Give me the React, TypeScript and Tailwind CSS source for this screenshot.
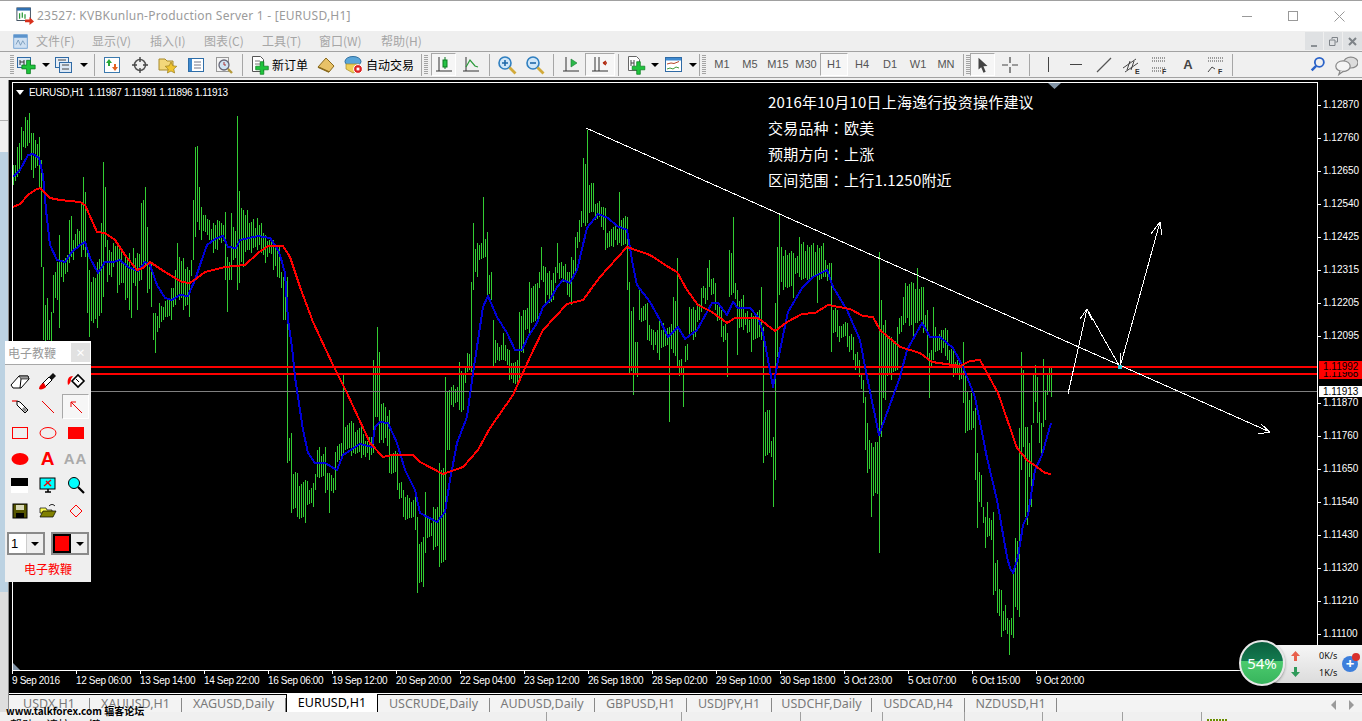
import React from 'react'

// [x, high, low] read off the chart, in page pixels
const BARS: number[][] = [
  [13,165,185],[17,147,177],[19,143,173],[21,127,160],[25,117,148],[29,113,143],[31,133,170],[33,133,178],[35,140,168],[39,137,187],
  [41,160,267],[43,267,340],[47,298,340],[49,320,340],[51,312,345],[53,275,313],[57,262,300],[59,235,328],[63,260,282],[67,255,272],
  [69,220,263],[71,216,257],[73,240,260],[77,229,247],[81,202,257],[83,177,250],[85,192,257],[87,253,313],[89,270,337],[93,277,323],
  [97,262,328],[101,223,313],[103,162,297],[105,187,247],[107,240,282],[111,252,277],[113,243,267],[117,243,293],[121,250,283],[125,257,300],
  [129,253,310],[131,267,318],[133,248,283],[137,253,310],[141,203,280],[145,187,267],[147,227,293],[151,262,307],[153,313,340],[155,313,353],
  [159,303,328],[163,307,320],[167,300,317],[171,288,320],[175,270,305],[177,243,297],[179,257,300],[183,258,310],[189,270,317],[193,200,260],
  [195,147,237],[197,146,222],[199,187,230],[201,207,240],[205,215,232],[209,220,240],[213,223,253],[217,220,250],[221,223,243],[225,212,280],
  [227,257,312],[229,262,280],[231,213,280],[233,227,260],[237,116,290],[239,191,283],[243,210,267],[247,210,250],[251,222,253],[257,218,250],
  [261,223,253],[265,235,263],[269,240,253],[273,240,270],[277,250,277],[279,247,278],[283,277,320],[287,277,463],[291,433,513],[297,473,517],
  [305,480,523],[313,483,507],[317,450,477],[325,447,493],[329,473,513],[335,452,490],[343,373,453],[353,423,453],[361,427,458],[369,437,460],
  [373,360,453],[377,327,417],[379,352,443],[383,403,443],[389,410,473],[397,453,490],[403,490,517],[409,498,518],[415,497,530],[417,517,593],
  [423,537,587],[425,492,553],[429,517,537],[433,507,550],[439,463,567],[445,377,560],[449,390,450],[453,385,407],[459,362,410],[463,373,410],
  [467,353,372],[471,282,372],[473,223,290],[477,243,277],[483,197,258],[487,232,297],[491,272,300],[493,320,367],[497,343,360],[503,333,360],
  [509,350,380],[513,363,383],[519,312,382],[523,310,353],[529,282,333],[537,283,320],[541,247,280],[545,267,303],[553,273,300],[557,243,273],
  [567,272,295],[571,257,305],[575,237,272],[579,220,242],[583,158,223],[587,130,223],[593,183,212],[601,207,227],[605,208,250],[613,227,247],
  [619,192,243],[627,217,290],[629,282,373],[633,307,395],[637,342,377],[639,290,320],[647,303,340],[653,330,350],[659,320,360],[663,323,347],
  [669,327,422],[673,297,353],[677,258,368],[683,367,407],[689,307,337],[695,310,337],[701,288,312],[707,268,300],[709,260,287],[715,283,310],
  [721,310,337],[727,333,377],[729,250,297],[733,217,293],[737,290,355],[743,295,330],[751,313,352],[761,287,340],[763,327,463],[769,410,453],
  [773,437,507],[775,303,480],[777,247,357],[779,215,295],[785,250,287],[793,253,298],[799,237,277],[807,245,280],[817,245,303],[823,243,277],
  [831,263,352],[837,310,337],[847,323,347],[853,337,360],[859,360,377],[863,380,403],[865,397,450],[867,423,473],[871,443,517],[875,442,493],
  [879,252,553],[881,300,437],[885,320,400],[891,337,380],[897,327,370],[903,297,325],[905,283,323],[913,283,340],[917,268,323],[923,287,333],
  [927,310,360],[929,353,398],[933,307,360],[941,330,353],[947,330,360],[953,350,377],[959,363,380],[963,342,403],[965,373,433],[971,393,430],
  [975,408,480],[977,453,528],[981,475,507],[985,517,548],[987,502,537],[991,520,540],[993,512,595],[997,560,613],[1001,590,637],[1005,605,630],
  [1009,620,655],[1013,570,638],[1015,538,607],[1019,428,617],[1021,352,470],[1023,370,447],[1025,427,517],[1027,427,525],[1029,443,477],[1031,425,507],
  [1033,373,423],[1035,365,402],[1037,377,423],[1039,412,443],[1041,423,454],[1043,359,427],[1045,390,420],[1047,375,395],[1049,367,392],[1051,367,397],
]

const BLUE = '13,177 20,170 28,155 33,154 39,158 43,175 46,210 50,245 57,260 65,262 72,252 80,245 85,242 90,258 98,273 105,262 113,262 120,260 128,267 138,271 145,262 150,265 157,285 165,298 172,300 180,295 188,296 195,280 200,265 207,245 215,239 223,236 228,247 236,248 240,240 258,236 270,238 278,250 280,255 285,273 288,320 292,347 295,377 298,397 303,430 308,453 315,463 325,463 337,470 343,455 360,444 372,447 375,427 380,422 388,423 397,443 405,470 415,490 420,513 437,522 445,512 450,480 457,443 467,417 472,380 477,347 483,307 488,296 497,317 507,333 515,350 522,350 528,337 537,323 543,307 550,300 557,287 563,280 570,283 577,270 587,228 598,214 608,218 617,226 627,230 632,260 637,285 650,302 660,320 668,337 678,327 685,339 697,330 712,303 718,303 727,315 733,302 738,308 750,308 758,317 763,333 773,387 780,350 788,312 802,288 813,277 827,270 833,287 847,310 860,340 867,377 879,435 900,377 907,350 922,323 930,337 940,337 953,348 963,367 975,397 987,458 997,500 1007,557 1010,568 1013,573 1018,557 1023,525 1028,515 1035,470 1042,455 1047,437 1051,423'
const RED = '13,207 20,204 28,195 35,190 40,188 50,198 60,200 80,202 85,205 97,232 105,233 115,240 125,255 137,270 143,268 150,262 165,272 182,282 190,283 197,278 205,272 225,267 245,265 258,253 268,246 283,246 290,257 300,287 313,322 333,365 347,393 370,443 383,457 392,455 413,455 420,462 443,474 463,467 478,450 490,428 513,395 530,357 543,330 567,304 583,300 600,277 627,247 650,255 670,268 677,272 687,290 698,305 712,312 727,323 735,318 758,318 775,331 787,322 802,314 815,313 828,305 850,309 863,316 873,317 880,330 900,347 920,353 932,362 960,366 970,361 980,360 998,393 1017,448 1027,460 1037,467 1045,473 1051,474'

const barPath = () => {
  const map = new Map<number, number[]>()
  BARS.forEach(([x, h, l]) => map.set(x, [h, l]))
  const xs = [...map.keys()].sort((a, b) => a - b)
  let d = ''
  for (let x = 13; x <= 1051; x += 2) {
    let v = map.get(x)
    if (!v) {
      const nx = xs.findIndex((k) => k > x)
      const a = map.get(xs[nx - 1])!
      const b = map.get(xs[nx])!
      const n = ((x * 7919) % 11) - 3
      let h = Math.max(a[0], b[0]) + n
      let l = Math.min(a[1], b[1]) - ((x * 104729) % 9) + 3
      if (l - h < 12) {
        const m = (h + l) / 2
        h = m - 8
        l = m + 8
      }
      v = [Math.round(h), Math.round(l)]
    }
    d += `M${x + 0.5} ${v[0]}V${v[1]}`
  }
  return d
}

const Chart = () => (
  <svg viewBox="13 83 1304 587" width={1304} height={587} className="block">
    <path d={barPath()} stroke="#32cd32" strokeWidth={1} fill="none" shapeRendering="crispEdges" />
    <path d="M13 391.5H1317" stroke="#808080" shapeRendering="crispEdges" />
    <path d="M13 367H1317M13 374H1317" stroke="#ff0000" strokeWidth={2} shapeRendering="crispEdges" />
    <polyline points={BLUE} fill="none" stroke="#0000d8" strokeWidth={2} strokeLinejoin="round" shapeRendering="crispEdges" />
    <polyline points={RED} fill="none" stroke="#ff0000" strokeWidth={2} strokeLinejoin="round" shapeRendering="crispEdges" />
    <g stroke="#ffffff" strokeWidth={1} fill="none" shapeRendering="crispEdges">
      <path d="M586 128L1270 432L1258 434M1270 432L1261 424" />
      <path d="M1068 394L1087 309L1120 367L1160 222" />
      <path d="M1087 309L1080 319M1087 309L1092 320" />
      <path d="M1160 222L1151 234M1160 222L1162 235" />
      <path d="M1120 353V367" />
    </g>
    <rect x={1118} y={365} width={4} height={4} fill="#2ec8d8" />
    <path d="M1048 83H1061L1054.5 89Z" fill="#8294a6" />
    <path d="M13 670V663L20 670Z" fill="#8294a6" />
  </svg>
)

const PRICES: [string, number][] = [
  ['1.12870', 105], ['1.12760', 138], ['1.12650', 171], ['1.12540', 204], ['1.12425', 237], ['1.12315', 270], ['1.12205', 303], ['1.12095', 336],
  ['1.11870', 403], ['1.11760', 436], ['1.11650', 469], ['1.11540', 502], ['1.11430', 535], ['1.11320', 568], ['1.11210', 601], ['1.11100', 634],
]

const TIMES = ['9 Sep 2016', '12 Sep 06:00', '13 Sep 14:00', '14 Sep 22:00', '16 Sep 06:00', '19 Sep 12:00', '20 Sep 20:00', '22 Sep 04:00', '23 Sep 12:00', '26 Sep 18:00', '28 Sep 02:00', '29 Sep 10:00', '30 Sep 18:00', '3 Oct 23:00', '5 Oct 07:00', '6 Oct 15:00', '9 Oct 20:00']

const TABS: [string, number][] = [
  ['USDX,H1', 81], ['XAUUSD,H1', 92], ['XAGUSD,Daily', 104], ['EURUSD,H1', 92], ['USCRUDE,Daily', 112], ['AUDUSD,Daily', 105], ['GBPUSD,H1', 92], ['USDJPY,H1', 85], ['USDCHF,Daily', 100], ['USDCAD,H4', 93], ['NZDUSD,H1', 92],
]

const MENUS: [string, number][] = [['文件(F)', 56], ['显示(V)', 58], ['插入(I)', 54], ['图表(C)', 58], ['工具(T)', 57], ['窗口(W)', 62], ['帮助(H)', 50]]

const Ico = ({ s = 20, children }: { s?: number; children: React.ReactNode }) => (
  <svg viewBox="0 0 20 20" width={s} height={s} className="block shrink-0">{children}</svg>
)

const Cross = ({ t }: { t: string }) => (
  <path transform={t} d="M-2 -7H2V-2H7V2H2V7H-2V2H-7V-2H-2Z" fill="#1fc43c" stroke="#0b7a20" strokeWidth={0.8} />
)

const Caret = () => <span className="w-0 h-0 border-x-[4px] border-x-transparent border-t-[4px] border-t-black" />

const Btn = ({ w = 28, pressed, children }: { w?: number; pressed?: boolean; children?: React.ReactNode }) => (
  <div
    style={{ width: w }}
    className={`h-[23px] shrink-0 flex items-center justify-center ${pressed ? 'border border-[#a8a8a8] border-r-white border-b-white bg-[#f6f6f6]' : ''}`}
  >
    {children}
  </div>
)

const Sep = ({ w = 6 }: { w?: number }) => (
  <div style={{ width: w }} className="h-[22px] shrink-0 flex justify-center">
    <div className="w-px h-full bg-[#a6a6a6]" />
  </div>
)

const Grip = () => (
  <div className="w-[4px] h-[20px] shrink-0 bg-[repeating-linear-gradient(180deg,#a4a4a4_0_1px,transparent_1px_2px)]" />
)

const Tf = ({ t, pressed }: { t: string; pressed?: boolean }) => (
  <Btn pressed={pressed} w={28}>
    <span className="text-[11px] text-[#555] font-['Liberation_Sans',sans-serif]">{t}</span>
  </Btn>
)

const Axes = () => <path d="M5 2V16M2 16H18" stroke="#333" strokeWidth={1} fill="none" />

const Toolbar = () => (
  <div className="h-[27px] shrink-0 flex items-center pl-[10px] border-y border-[#a2a2a2] bg-[#f0f0f0] font-['Noto_Sans_CJK_SC',sans-serif] text-[12px] text-black">
    <Grip />
    <Btn w={38}>
      <div className="flex items-center gap-[6px]">
        <Ico>
          <rect x={1.5} y={2.5} width={13} height={10} fill="#dce8f5" stroke="#2f6aa5" />
          <path d="M4 5v5M8 5v5M4 7h4" stroke="#333" />
          <Cross t="translate(12.5,12) scale(0.95)" />
        </Ico>
        <Caret />
      </div>
    </Btn>
    <Btn w={38}>
      <div className="flex items-center gap-[6px]">
        <Ico>
          <rect x={1.5} y={2.5} width={13} height={10} fill="#e6eef7" stroke="#2f6aa5" />
          <rect x={5.5} y={7.5} width={12} height={10} fill="#dce8f5" stroke="#2f6aa5" />
          <path d="M8 10h7M8 14h7M4 5h8" stroke="#444" />
        </Ico>
        <Caret />
      </div>
    </Btn>
    <Sep w={8} />
    <Btn>
      <Ico>
        <rect x={2.5} y={2.5} width={15} height={15} fill="#fff" stroke="#3b79ae" />
        <path d="M7 4l3 4H8v3H6V8H4z" fill="#29a83a" />
        <path d="M13 16l-3-4h2V9h2v3h2z" fill="#e2611f" />
      </Ico>
    </Btn>
    <Btn>
      <Ico>
        <circle cx={10} cy={10} r={5.5} fill="none" stroke="#555" strokeWidth={1.5} />
        <path d="M10 2v5M10 13v5M2 10h5M13 10h5" stroke="#444" strokeWidth={1.4} />
      </Ico>
    </Btn>
    <Btn>
      <Ico>
        <path d="M1 4h6l2 2h6v9H1z" fill="#f3d77a" stroke="#a88a2a" />
        <path d="M13 7l1.8 3.8 4 .5-3 2.7.8 4-3.6-2-3.6 2 .8-4-3-2.7 4-.5z" fill="#f0c531" stroke="#9b7d1a" strokeWidth={0.7} />
      </Ico>
    </Btn>
    <Btn>
      <Ico>
        <rect x={2.5} y={3.5} width={15} height={13} fill="#fff" stroke="#2e6da8" />
        <rect x={3} y={4} width={3} height={12} fill="#3f8ad0" />
        <path d="M8 7h7M8 10h7M8 13h7" stroke="#778" />
      </Ico>
    </Btn>
    <Btn>
      <Ico>
        <rect x={2.5} y={2.5} width={12} height={14} fill="#f4f4f4" stroke="#999" />
        <circle cx={10} cy={10} r={5} fill="#cfe3f3" stroke="#667" strokeWidth={1.3} />
        <path d="M10 7v3h2" stroke="#a33" fill="none" />
        <path d="M14 14l4 4" stroke="#b59a3c" strokeWidth={2.4} />
      </Ico>
    </Btn>
    <Sep w={8} />
    <Btn w={66}>
      <div className="flex items-center gap-[3px] -ml-[1px]">
        <Ico>
          <path d="M3.5 1.5h8l3 3v12h-11z" fill="#fff" stroke="#555" />
          <path d="M6 6h5M6 9h6" stroke="#777" />
          <Cross t="translate(13,13) scale(0.9)" />
        </Ico>
        <span>新订单</span>
      </div>
    </Btn>
    <Btn w={28}>
      <Ico>
        <path d="M2 12L10 3l8 8-5 6z" fill="#e8c268" stroke="#8a6a1e" />
        <path d="M2 12l11 5" stroke="#8a6a1e" strokeWidth={1.4} />
      </Ico>
    </Btn>
    <Btn w={78}>
      <div className="flex items-center gap-[2px]">
        <Ico>
          <ellipse cx={9} cy={6.5} rx={8} ry={5} fill="#5ba6d8" stroke="#2f6f9f" />
          <path d="M2 9h13v6l-6 3-7-4z" fill="#efd05a" stroke="#a68a28" strokeWidth={0.7} />
          <circle cx={14} cy={14} r={4.4} fill="#d22" stroke="#fff" />
          <rect x={12.6} y={12.6} width={2.8} height={2.8} fill="#fff" />
        </Ico>
        <span>自动交易</span>
      </div>
    </Btn>
    <Sep w={6} />
    <Grip />
    <Btn w={3} />
    <Btn w={25} pressed>
      <Ico>
        <Axes />
        <path d="M11 2v12" stroke="#0a7a20" />
        <rect x={9} y={5} width={4} height={7} fill="#25c244" stroke="#0a7a20" />
      </Ico>
    </Btn>
    <Btn w={30}>
      <Ico>
        <Axes />
        <path d="M5 12L9 5l5 6 3 1" stroke="#2a9a3a" strokeWidth={1.2} fill="none" />
      </Ico>
    </Btn>
    <Sep w={7} />
    <Btn>
      <Ico>
        <circle cx={8} cy={8} r={6} fill="#cfe6f8" stroke="#2f7fc0" strokeWidth={1.6} />
        <path d="M5 8h6M8 5v6" stroke="#1f68a8" strokeWidth={1.6} />
        <path d="M12.5 12.5l6 6" stroke="#d2aa3a" strokeWidth={2.8} />
      </Ico>
    </Btn>
    <Btn>
      <Ico>
        <circle cx={8} cy={8} r={6} fill="#cfe6f8" stroke="#2f7fc0" strokeWidth={1.6} />
        <path d="M5 8h6" stroke="#1f68a8" strokeWidth={1.6} />
        <path d="M12.5 12.5l6 6" stroke="#d2aa3a" strokeWidth={2.8} />
      </Ico>
    </Btn>
    <Sep w={8} />
    <Btn>
      <Ico>
        <Axes />
        <path d="M10 4v8l6-4z" fill="#2cb84a" stroke="#1a7a30" strokeWidth={0.6} />
      </Ico>
    </Btn>
    <Btn w={30} pressed>
      <Ico>
        <Axes />
        <path d="M9 2v14" stroke="#333" />
        <path d="M17 8h-4M13 8l3-2M13 8l3 2" stroke="#b02a10" strokeWidth={1.4} fill="none" />
      </Ico>
    </Btn>
    <Sep w={6} />
    <Btn w={38}>
      <div className="flex items-center gap-[5px] ml-[4px]">
        <Ico>
          <path d="M2.5 1.5h8l3 3v11h-11z" fill="#fff" stroke="#666" />
          <path d="M5 5v6M8 5v6M5 8h3" stroke="#444" />
          <Cross t="translate(12.5,13) scale(0.9)" />
        </Ico>
        <Caret />
      </div>
    </Btn>
    <Btn w={38}>
      <div className="flex items-center gap-[5px] ml-[4px]">
        <Ico>
          <rect x={1.5} y={2.5} width={16} height={14} fill="#fff" stroke="#2f6aa5" />
          <rect x={2} y={3} width={15} height={2.5} fill="#3f8ad0" />
          <path d="M3 9l4-1 3 .5 5-2" stroke="#b5472c" fill="none" />
          <path d="M3 14l3-1 3 1 3-2 3 1" stroke="#3f9a3a" fill="none" />
        </Ico>
        <Caret />
      </div>
    </Btn>
    <Sep w={5} />
    <Grip />
    <Btn w={2} />
    <Tf t="M1" />
    <Tf t="M5" />
    <Tf t="M15" />
    <Tf t="M30" />
    <Tf t="H1" pressed />
    <Tf t="H4" />
    <Tf t="D1" />
    <Tf t="W1" />
    <Tf t="MN" />
    <Sep w={6} />
    <Grip />
    <Btn w={25} pressed>
      <Ico s={18}>
        <path d="M5 2l10 9-4.5 .5 2.5 6-2.5 1-2.500-6L5 15z" fill="#444" />
      </Ico>
    </Btn>
    <Btn w={30}>
      <Ico>
        <path d="M10 2v6M10 12v6M2 10h6M12 10h6" stroke="#444" strokeWidth={1.2} />
      </Ico>
    </Btn>
    <Sep w={9} />
    <Btn><div className="w-px h-[15px] bg-[#444]" /></Btn>
    <Btn><div className="w-[12px] h-px bg-[#444]" /></Btn>
    <Btn>
      <Ico><path d="M3 17L17 3" stroke="#555" strokeWidth={1.2} /></Ico>
    </Btn>
    <Btn>
      <Ico>
        <path d="M1 13L14 4M3 17L16 8M5 15l3-9M9 15l3-9" stroke="#444" fill="none" />
        <text x={13} y={19} fontSize={7} fill="#333" fontFamily="Liberation Sans" fontWeight={700}>E</text>
      </Ico>
    </Btn>
    <Btn>
      <Ico>
        <path d="M2 3h14M2 6h14M2 13h14M2 16h9" stroke="#444" strokeDasharray="1 1" fill="none" />
        <text x={12} y={19} fontSize={7} fill="#333" fontFamily="Liberation Sans" fontWeight={700}>F</text>
      </Ico>
    </Btn>
    <Btn><span className="font-['Liberation_Sans',sans-serif] text-[13px] font-bold text-[#444]">A</span></Btn>
    <Btn>
      <Ico>
        <path d="M2 3h15M2 6h15" stroke="#444" strokeDasharray="1 1" fill="none" />
        <path d="M2 17l4-5 3 2" stroke="#444" fill="none" />
        <text x={12} y={19} fontSize={7} fill="#333" fontFamily="Liberation Sans" fontWeight={700}>F</text>
      </Ico>
    </Btn>
    <Sep w={4} />
    <div className="ml-auto flex items-center gap-[7px] pr-[4px]">
      <Ico s={18}>
        <circle cx={11.500} cy={7} r={5} fill="none" stroke="#2a62c8" strokeWidth={2} />
        <path d="M8 11l-5 5" stroke="#2a62c8" strokeWidth={2.8} />
      </Ico>
      <Ico s={24}>
        <ellipse cx={14} cy={8} rx={6} ry={4.500} fill="#dcdcdc" stroke="#888" />
        <ellipse cx={7.500} cy={11} rx={6} ry={4.500} fill="#f4f4f4" stroke="#888" />
        <path d="M5 15l-1 3 4-3" fill="#f4f4f4" stroke="#888" />
      </Ico>
    </div>
  </div>
)

const Palette = () => (
  <div className="absolute left-[5px] top-[341px] w-[86px] h-[241px] bg-[#efefef] flex flex-col font-['Noto_Sans_CJK_SC',sans-serif]">
    <div className="h-[24px] shrink-0 bg-white border-b border-[#a8a8a8] flex items-center justify-between pl-[3px] pr-px text-[12px] text-[#999]">
      <span>电子教鞭</span>
      <span className="w-[19px] h-[19px] bg-[#e1e1e1] text-[#fff] text-[10px] leading-[19px] text-center font-bold">×</span>
    </div>
    <div className="grid grid-cols-[28px_28px_28px] auto-rows-[26px] pl-px pt-[3px]">
      <Cell>
        <path d="M1 14L9 5h9l1 3-8 9H3z" fill="#fff" stroke="#000" />
        <path d="M9 5l2 3h8l-1-3z" fill="#999" stroke="#000" strokeWidth={0.6} />
        <path d="M11 8l-1 9" stroke="#000" />
      </Cell>
      <Cell>
        <path d="M4 13l7-7 3 3-7 7z" fill="#fff" stroke="#000" />
        <path d="M11 6l4-4 3 3-4 4z" fill="#111" />
        <path d="M1 18c0-3 3-6 5-6l2 4c-2 2-5 3-7 2z" fill="#e00" />
      </Cell>
      <Cell>
        <path d="M6 10l6-6 6 6-6 6z" fill="#fff" stroke="#000" strokeWidth={1.6} />
        <path d="M7 5C2 5 1 9 2 14c2-1 3-4 3-6z" fill="#f00" />
        <path d="M10 8l3 3" stroke="#000" />
      </Cell>
      <Cell>
        <path d="M2 4h5" stroke="#e00" strokeWidth={1.2} />
        <path d="M7 4l3 1 8 8-3 3-8-8z" fill="#fff" stroke="#000" />
        <path d="M13 11l3 3" stroke="#888" strokeWidth={3} />
      </Cell>
      <Cell><path d="M4 4l12 12" stroke="#e00" /></Cell>
      <Cell pressed>
        <path d="M16 16L5 5M5 5h5M5 5v5" stroke="#e00" fill="none" />
      </Cell>
      <Cell><rect x={2.500} y={4.500} width={15} height={11} fill="none" stroke="#f00" /></Cell>
      <Cell><ellipse cx={10} cy={10} rx={8} ry={5.500} fill="none" stroke="#f00" /></Cell>
      <Cell><rect x={2} y={4} width={16} height={12} fill="#f00" /></Cell>
      <Cell><ellipse cx={10} cy={10} rx={8.500} ry={6} fill="#f00" /></Cell>
      <Cell>
        <span className="text-[19px] leading-none font-black text-[#f00] font-['Liberation_Sans',sans-serif]">A</span>
      </Cell>
      <Cell>
        <span className="text-[15px] leading-none font-bold text-[#aaa] tracking-[1px] font-['Liberation_Sans',sans-serif]">AA</span>
      </Cell>
      <Cell>
        <rect x={1} y={3} width={17} height={8} fill="#000" />
        <rect x={1} y={11} width={17} height={7} fill="#fff" />
      </Cell>
      <Cell>
        <rect x={2} y={3} width={15} height={11} fill="#0ff" stroke="#000" />
        <path d="M6 11l7-6M8 6l5 5" stroke="#e00" strokeWidth={1.4} />
        <path d="M7 17h6M10 14v3" stroke="#000" strokeWidth={1.5} />
      </Cell>
      <Cell>
        <circle cx={8} cy={8} r={5.500} fill="#0ff" stroke="#000" />
        <path d="M12 12l6 6" stroke="#000" strokeWidth={2.2} />
      </Cell>
      <Cell>
        <rect x={3} y={3} width={14} height={14} fill="#555500" stroke="#000" />
        <rect x={6} y={4} width={8} height={5} fill="#d8d8b8" />
        <rect x={6} y={12} width={8} height={5} fill="#000" />
      </Cell>
      <Cell>
        <path d="M2 7h6l1 2h5v3H2z" fill="#ffff55" stroke="#000" strokeWidth={0.7} />
        <path d="M2 16l3-6h13l-3 6z" fill="#808000" stroke="#000" strokeWidth={0.7} />
        <path d="M11 5c2-2 4-2 6 0" stroke="#000" fill="none" />
      </Cell>
      <Cell><path d="M10 4l6 6-6 6-6-6z" fill="none" stroke="#f00" /></Cell>
    </div>
    <div className="flex justify-between px-[2px] mt-[8px]">
      <div className="w-[38px] h-[23px] border-2 border-[#8a8a8a] bg-white flex items-center justify-between text-[13px] pl-[2px] font-['Liberation_Sans',sans-serif]">
        1
        <span className="w-[17px] h-full bg-[#eee] border-l border-[#ccc] flex items-center justify-center"><Caret /></span>
      </div>
      <div className="w-[38px] h-[23px] border-2 border-[#8a8a8a] bg-[#eee] flex items-center justify-between">
        <span className="w-[18px] h-full bg-[#f00] border-2 border-black" />
        <span className="w-[15px] flex items-center justify-center"><Caret /></span>
      </div>
    </div>
    <div className="text-center text-[12px] text-[#f00] mt-[5px]">电子教鞭</div>
  </div>
)

const Cell = ({ pressed, children }: { pressed?: boolean; children: React.ReactNode }) => {
  const isText = React.Children.toArray(children).every((c: any) => c?.type === 'span')
  return (
    <div className={`w-[27px] h-[25px] flex items-center justify-center ${pressed ? 'border border-[#a8a8a8] border-r-white border-b-white bg-[#f6f6f6]' : ''}`}>
      {isText ? children : <Ico>{children}</Ico>}
    </div>
  )
}

const NetWidget = () => (
  <div className="absolute left-[1239px] top-[640px] w-[123px] h-[46px] font-['Noto_Sans',sans-serif]">
    <div className="absolute left-[20px] top-[5px] right-0 h-[38px] rounded-l-[19px] bg-gradient-to-b from-[#f6f6f6] to-[#dcdcdc] shadow-[0_3px_6px_rgba(0,0,0,0.25)] flex items-center">
      <div className="ml-[32px] flex flex-col gap-[6px] items-center leading-none">
        <svg width={9} height={10} viewBox="0 0 9 10"><path d="M4.500 0L9 5H6v5H3V5H0z" fill="#e8604c" /></svg>
        <svg width={9} height={10} viewBox="0 0 9 10"><path d="M4.500 10L9 5H6V0H3v5H0z" fill="#2f9a5a" /></svg>
      </div>
      <div className="ml-[19px] flex flex-col gap-[4px] text-[9px] leading-[13px] text-[#111] text-right">
        <span>0K/s</span>
        <span>1K/s</span>
      </div>
    </div>
    <div className="absolute left-0 top-0 w-[46px] h-[46px] rounded-full border-2 border-[#e8e8e8] bg-[linear-gradient(180deg,#0c5f3e_0%,#137a4f_46%,#4ccb6e_46%,#37b45c_100%)] shadow-[0_1px_3px_rgba(0,0,0,0.4)] flex items-center justify-center text-white text-[15px]">
      54%
    </div>
    <div className="absolute left-[103px] top-[16px] w-[16px] h-[16px] rounded-full bg-[#3d7fdc] text-white text-[15px] leading-[15px] text-center font-bold">+</div>
    <div className="absolute left-[113px] top-[13px] w-[8px] h-[8px] rounded-full bg-[#d9302c]" />
  </div>
)

const Colon = () => <span className="font-['Noto_Sans_CJK_TC',sans-serif]">：</span>

export default function App() {
  return (
    <div className="relative w-[1362px] h-[721px] overflow-hidden flex flex-col bg-[#f0f0f0]">
      <div className="h-[31px] shrink-0 bg-white border-t border-[#a0a0a0] flex items-center pl-[16px]">
        <Ico s={18}>
          <rect x={1} y={1} width={15} height={14} fill="#fff" stroke="#345" />
          <rect x={1} y={1} width={15} height={3} fill="#2f6fb0" />
          <path d="M4 7v6M7 6v6M10 8v5" stroke="#2a9a3a" strokeWidth={1.4} />
          <path d="M10 14h5v-3l5 5-5 4v-3h-5z" fill="#d8301c" />
        </Ico>
        <span className="ml-[3px] text-[12px] text-[#9b9b9b] tracking-[0.24px] font-['Noto_Sans',sans-serif]">
          23527: KVBKunlun-Production Server 1 - [EURUSD,H1]
        </span>
        <div className="ml-auto flex">
          <div className="w-[46px] h-[30px] flex items-center justify-center"><div className="w-[10px] h-px bg-[#999]" /></div>
          <div className="w-[46px] h-[30px] flex items-center justify-center"><div className="w-[10px] h-[10px] border border-[#999]" /></div>
          <div className="w-[46px] h-[30px] flex items-center justify-center">
            <svg width={11} height={11} viewBox="0 0 11 11"><path d="M.5 .5l10 10M10.500 .5l-10 10" stroke="#999" /></svg>
          </div>
        </div>
      </div>

      <div className="h-[20px] shrink-0 bg-[#efefef] flex items-center pl-[13px] text-[12px] text-[#a6a6a6] font-['Noto_Sans_CJK_SC',sans-serif]">
        <Ico s={15}>
          <rect x={1} y={1} width={18} height={18} fill="#cfe0f2" stroke="#5b93cc" />
          <rect x={1} y={1} width={18} height={4} fill="#5b93cc" />
          <path d="M4 14l3-6 3 7 3-6 3 5" stroke="#6a8fb0" fill="none" />
        </Ico>
        <div className="flex ml-[8px]">
          {MENUS.map(([m, w]) => (
            <span key={m} style={{ width: w }}>{m}</span>
          ))}
        </div>
        <div className="ml-auto flex gap-px h-[18px]">
          <div className="w-[18px] bg-[#dfe1e3] flex items-end justify-center pb-[3px]"><div className="w-[6px] h-[2px] bg-[#8a8f94]" /></div>
          <div className="w-[18px] bg-[#dfe1e3] flex items-center justify-center">
            <svg width={9} height={9} viewBox="0 0 9 9"><path d="M3 2V.5h5.500V5H6.500M.5 3h5.500v5.500H.5z" fill="none" stroke="#7e8388" /></svg>
          </div>
          <div className="w-[19px] bg-[#dfe1e3] flex items-center justify-center">
            <svg width={9} height={9} viewBox="0 0 9 9"><path d="M1 1l7 7M8 1L1 8" stroke="#7e8388" strokeWidth={2} /></svg>
          </div>
        </div>
      </div>

      <Toolbar />
      <div className="h-[2px] shrink-0 bg-[#f0f0f0]" />

      <div className="flex-1 flex min-h-0">
        <div className="w-[9px] shrink-0 flex flex-col border-r border-[#8c8c8c]">
          <div className="h-[41px] bg-[#f0f0f0] border-b border-[#b0b0b0]" />
          <div className="h-[31px] bg-[#f0f0f0]" />
          <div className="flex-1 bg-[#bcd2e2]" />
          <div className="h-[120px] bg-[#dedede]" />
        </div>
        <div className="flex-1 flex flex-col min-w-0">
          <div className="h-[611px] shrink-0 bg-black border-b border-white flex flex-col pt-[2px] pl-[3px] box-content">
            <div className="flex">
              <div className="relative w-[1306px] h-[589px] border border-white overflow-hidden shrink-0">
                <Chart />
                <div className="absolute left-[3px] top-[3px] flex items-center gap-[5px] text-[10px] leading-[13px] text-white tracking-[-0.35px] font-['Liberation_Sans',sans-serif] whitespace-pre">
                  <span className="w-0 h-0 border-x-[4px] border-x-transparent border-t-[5px] border-t-white" />
                  EURUSD,H1  1.11987 1.11991 1.11896 1.11913
                </div>
                <div className="absolute left-[755px] top-[6px] flex flex-col text-[15px] leading-[26px] tracking-[0.2px] text-white font-['Noto_Sans_CJK_SC',sans-serif]">
                  <span>2016年10月10日上海逸行投资操作建议</span>
                  <span>交易品种<Colon />欧美</span>
                  <span>预期方向<Colon />上涨</span>
                  <span>区间范围<Colon />上行1.1250附近</span>
                </div>
              </div>
              <div className="relative flex-1 text-[10px] leading-[12px] text-white font-['Liberation_Sans',sans-serif]">
                {PRICES.map(([p, y]) => (
                  <div key={p} style={{ top: y - 88 }} className="absolute left-0 flex items-center gap-[2px]">
                    <span className="w-[3px] h-px bg-white" />
                    <span>{p}</span>
                  </div>
                ))}
                <div className="absolute left-[1px] top-[279px] w-[43px] h-[18px] bg-[#f00] text-black pl-[4px] flex flex-col">
                  <span className="order-2 -mt-[3px] h-[10px] leading-[10px]">1.11968</span>
                  <span className="order-1 relative h-[11px] leading-[11px] bg-[#f00]">1.11992</span>
                </div>
                <div className="absolute left-[1px] top-[304px] w-[43px] h-[11px] bg-white text-black pl-[4px] leading-[11px]">1.11913</div>
              </div>
            </div>
            <div className="h-[18px] flex text-[10px] text-white tracking-[-0.35px] font-['Liberation_Sans',sans-serif]">
              {TIMES.map((t) => (
                <div key={t} className="w-[64px] shrink-0 relative whitespace-nowrap pt-[3px] leading-[13px]">
                  <span className="absolute left-0 top-0 w-px h-[3px] bg-white" />
                  <span className="block">{t}</span>
                </div>
              ))}
            </div>
          </div>

          <div className="flex-1 bg-[#f3f3f3] border-t border-black flex text-[12.500px] text-[#7a7a7a] font-['Noto_Sans',sans-serif] min-h-0">
            {TABS.map(([t, w]) =>
              t === 'EURUSD,H1' ? (
                <div key={t} style={{ width: w }} className="h-[20px] -mt-px bg-white border-x border-b border-black text-black flex items-center justify-center">{t}</div>
              ) : (
                <div key={t} style={{ width: w }} className="h-[19px] flex items-center justify-center">
                  <span className="flex-1 text-center">{t}</span>
                  <span className="w-px h-[14px] bg-[#888]" />
                </div>
              ),
            )}
            <div className="ml-auto flex items-center gap-[13px] pr-[8px] h-[19px]">
              <span className="w-0 h-0 border-y-[5px] border-y-transparent border-r-[5px] border-r-[#9a9a9a]" />
              <span className="w-0 h-0 border-y-[5px] border-y-transparent border-l-[5px] border-l-[#9a9a9a]" />
            </div>
          </div>
        </div>
      </div>

      <div className="h-[9px] shrink-0 bg-[#f0f0f0] overflow-hidden flex text-[12px] leading-[14px] text-black font-['Noto_Sans_CJK_SC',sans-serif]">
        <div className="w-[547px] border-r border-[#a0a0a0] pl-[10px] pt-[6px]">帮助，请按 F1 键</div>
        <div className="w-[135px] border-r border-[#a0a0a0]" />
        <div className="w-[119px] border-r border-[#a0a0a0]" />
        <div className="w-[82px] border-r border-[#a0a0a0]" />
        <div className="w-[82px] border-r border-[#a0a0a0]" />
        <div className="w-[78px] border-r border-[#a0a0a0]" />
        <div className="w-[80px] border-r border-[#a0a0a0]" />
        <div className="w-[79px] border-r border-[#a0a0a0]" />
        <div className="w-[20px] ml-[5px] mt-[7px] h-[2px] bg-[repeating-linear-gradient(90deg,#6b8e00_0_2px,transparent_2px_3px)]" />
      </div>

      <Palette />
      <NetWidget />
      <div className="absolute left-[6px] top-[704px] text-[10px] leading-[13px] font-bold text-black font-['Noto_Sans_CJK_SC',sans-serif] [text-shadow:0_0_2px_#fff]">
        www.talkforex.com 辐客论坛
      </div>
    </div>
  )
}
